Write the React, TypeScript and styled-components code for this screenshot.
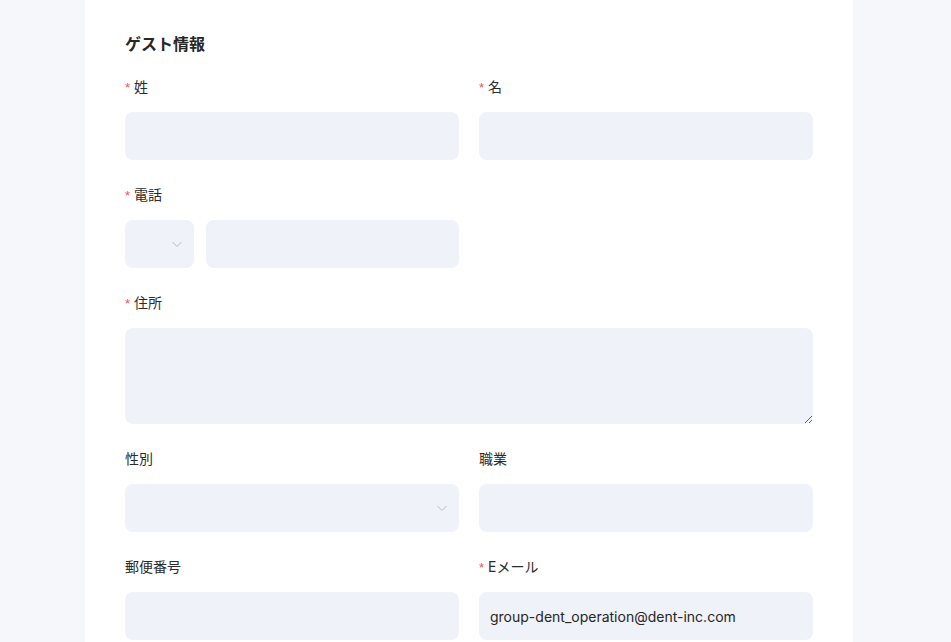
import React from 'react';
import styled, { createGlobalStyle } from 'styled-components';

const GlobalStyle = createGlobalStyle`
  body {
    margin: 0;
    background: #f5f7fb;
    font-family: Inter, "Noto Sans CJK JP", sans-serif;
    color: #262626;
  }
  * { box-sizing: border-box; }
`;

const Page = styled.div`
  display: flex;
  justify-content: flex-start;
  padding-left: 85px;
  min-height: 100vh;
`;

const Card = styled.div`
  width: 768px;
  background: #fff;
  padding: 32px 40px 40px;
`;

const Title = styled.h2`
  margin: 0 0 20px;
  font-size: 16px;
  line-height: 24px;
  font-weight: 700;
  color: #262626;
`;

const Grid = styled.div`
  display: grid;
  grid-template-columns: 1fr 1fr;
  column-gap: 20px;
`;

const Field = styled.div<{ $full?: boolean }>`
  grid-column: ${(p) => (p.$full ? '1 / -1' : 'auto')};
  margin-bottom: 24px;
`;

const Label = styled.label<{ $required?: boolean }>`
  display: flex;
  align-items: center;
  height: 22px;
  font-size: 14px;
  line-height: 22px;
  margin-bottom: 14px;
  color: #2b2b2b;
  &::before {
    content: ${(p) => (p.$required ? "'*'" : 'none')};
    color: #ff4d4f;
    margin-right: 4px;
    font-family: "Liberation Sans", sans-serif;
    font-size: 13px;
    line-height: 1;
    align-self: flex-start;
    margin-top: 5px;
  }
`;

const Input = styled.input`
  display: block;
  width: 100%;
  height: 48px;
  border: none;
  border-radius: 8px;
  background: #eff2f9;
  padding: 0 11px;
  font: inherit;
  font-size: 14px;
  color: #262626;
  outline: none;
`;

const TextArea = styled.textarea`
  display: block;
  width: 100%;
  height: 96px;
  border: none;
  border-radius: 8px;
  background: #eff2f9;
  padding: 8px 11px;
  font: inherit;
  font-size: 14px;
  resize: vertical;
  outline: none;
`;

const PhoneRow = styled.div`
  display: flex;
  gap: 12px;
`;

const SelectBox = styled.div<{ $width?: number }>`
  display: flex;
  align-items: center;
  justify-content: flex-end;
  width: ${(p) => (p.$width ? `${p.$width}px` : '100%')};
  flex-shrink: 0;
  height: 48px;
  border-radius: 8px;
  background: #eff2f9;
  padding-right: 11px;
`;

const Chevron = () => (
  <svg width="12" height="12" viewBox="0 0 12 12" fill="none">
    <path d="M1.5 4l4.5 4.5L10.5 4" stroke="#b8bcc4" strokeWidth="1" />
  </svg>
);

export default function App() {
  return (
    <>
      <GlobalStyle />
      <Page>
        <Card>
          <Title>ゲスト情報</Title>
          <Grid>
            <Field>
              <Label $required>姓</Label>
              <Input />
            </Field>
            <Field>
              <Label $required>名</Label>
              <Input />
            </Field>
            <Field>
              <Label $required>電話</Label>
              <PhoneRow>
                <SelectBox $width={69}>
                  <Chevron />
                </SelectBox>
                <Input />
              </PhoneRow>
            </Field>
            <div />
            <Field $full>
              <Label $required>住所</Label>
              <TextArea />
            </Field>
            <Field>
              <Label>性別</Label>
              <SelectBox>
                <Chevron />
              </SelectBox>
            </Field>
            <Field>
              <Label>職業</Label>
              <Input />
            </Field>
            <Field>
              <Label>郵便番号</Label>
              <Input />
            </Field>
            <Field>
              <Label $required>Eメール</Label>
              <Input defaultValue="group-dent_operation@dent-inc.com" />
            </Field>
          </Grid>
        </Card>
      </Page>
    </>
  );
}
